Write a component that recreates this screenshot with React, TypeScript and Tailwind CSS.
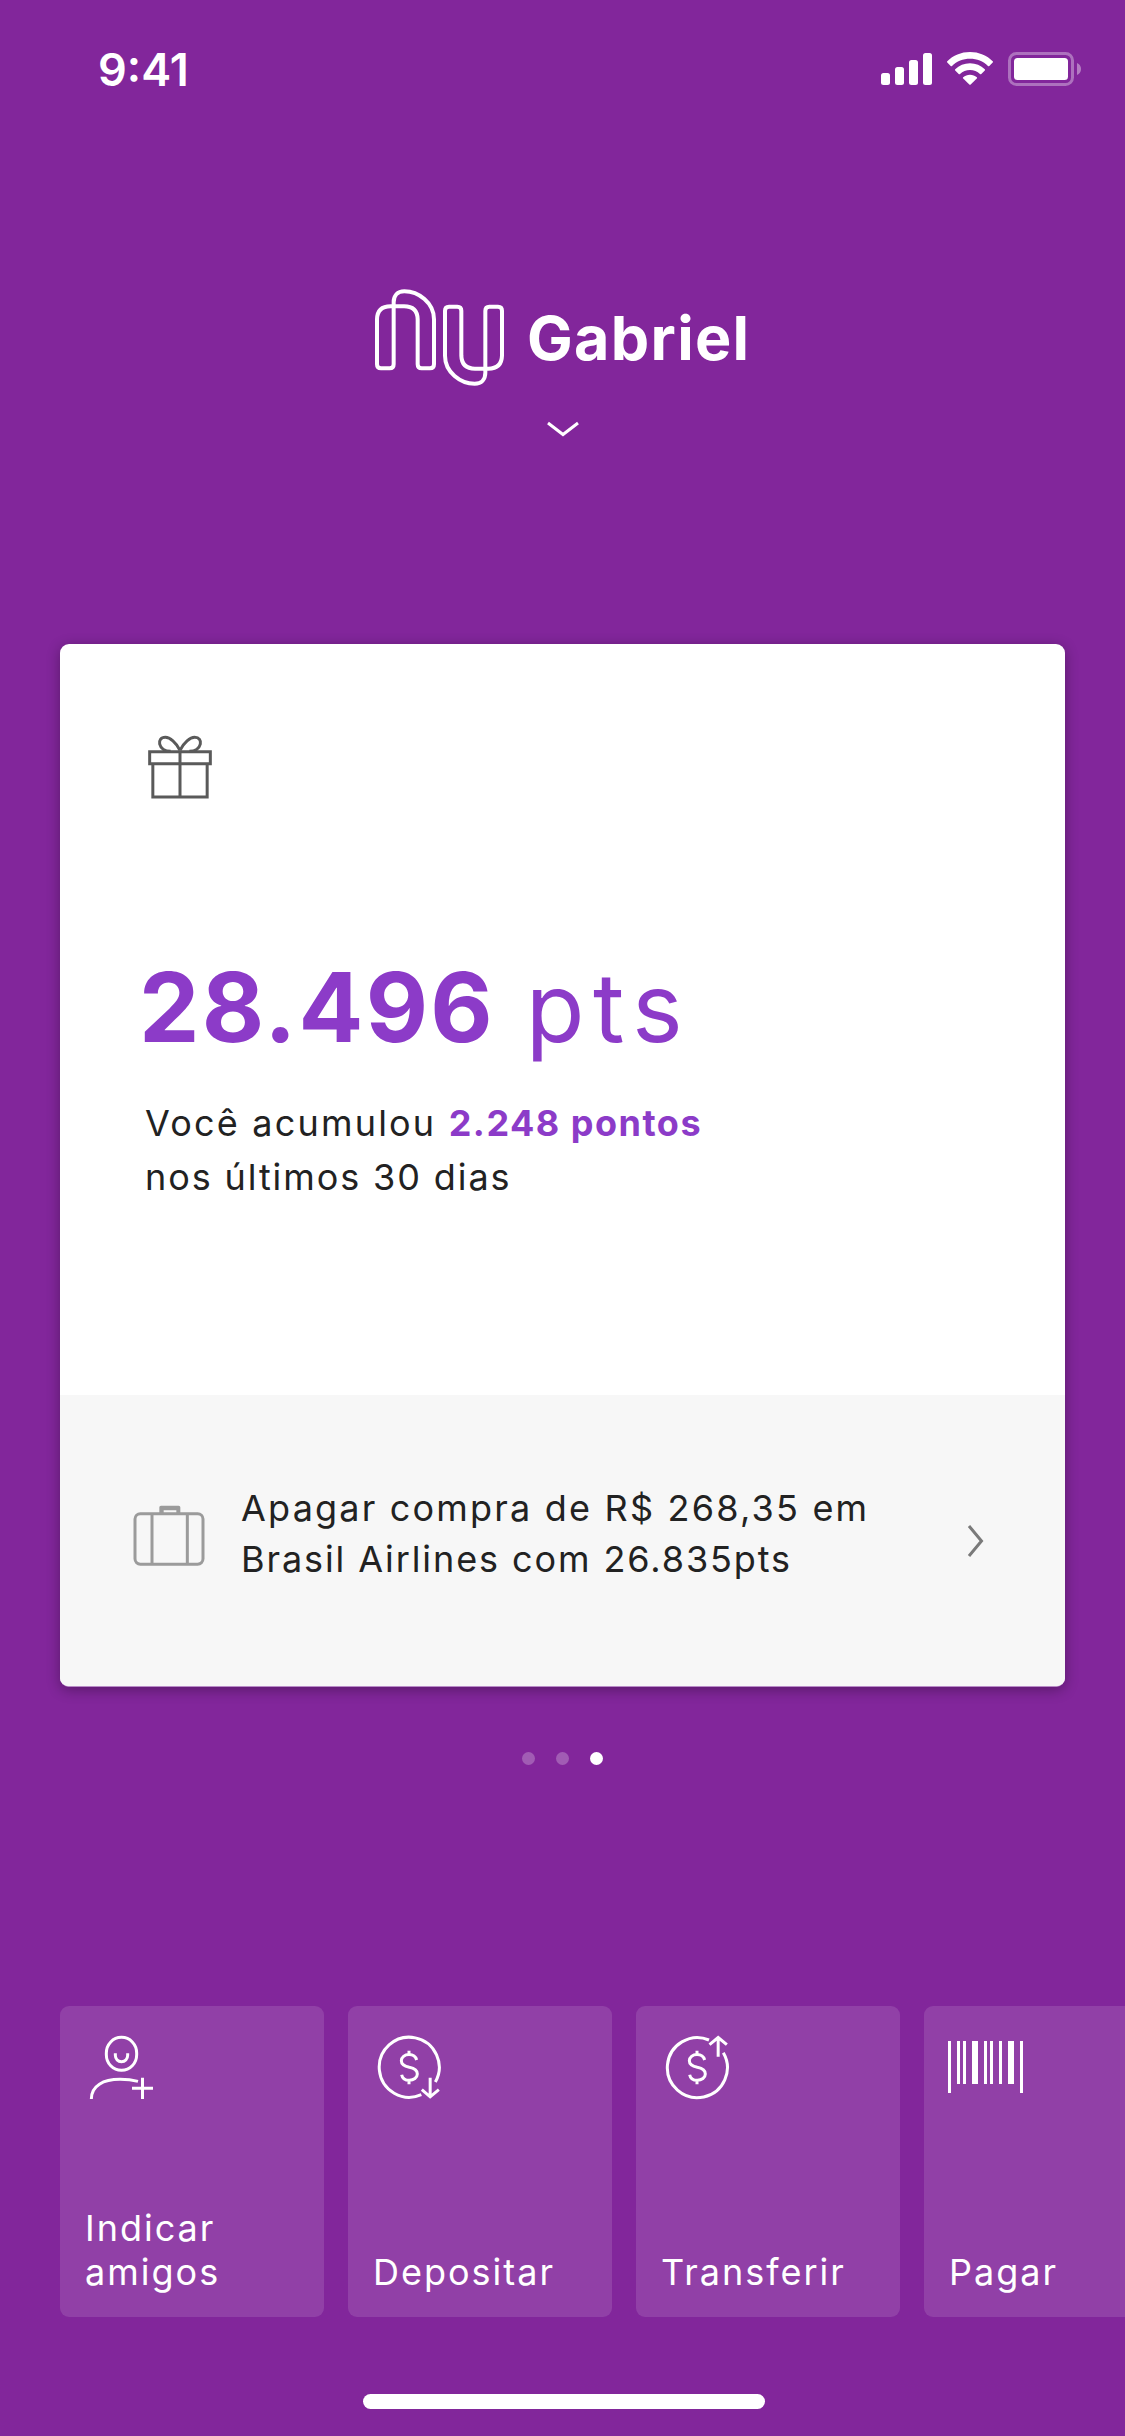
import React from 'react';

const shortcuts = [
  { label: 'Indicar amigos', icon: <InviteIcon /> },
  { label: 'Depositar', icon: <DepositIcon /> },
  { label: 'Transferir', icon: <TransferIcon /> },
  { label: 'Pagar', icon: <BarcodeIcon /> },
];

function StatusBar() {
  return (
    <div className="flex h-[132px] items-start justify-between pl-[98px] pr-[44px] text-white">
      <span className="mt-[47px] text-[45px] leading-[45px] font-semibold">9:41</span>
      <div className="mt-[52px] flex">
        {/* Signal */}
        <svg className="mt-px h-[32px] w-[51px]" viewBox="0 0 51 32" fill="currentColor">
          <rect x="0" y="20" width="9" height="12" rx="2.5" />
          <rect x="14" y="14" width="9" height="18" rx="2.5" />
          <rect x="28" y="7" width="9" height="25" rx="2.5" />
          <rect x="42" y="0" width="9" height="32" rx="2.5" />
        </svg>
        {/* Wifi */}
        <svg className="ml-[15px] h-[33px] w-[46px]" viewBox="0 0 46 33" fill="currentColor">
          <path d="M23 0C31.800 0 40 3.400 45.700 9.200Q46.300 9.900 45.700 10.500L42.300 13.900Q41.700 14.400 41 13.900C36.200 9.300 29.900 6.800 23 6.800S9.800 9.300 5 13.900Q4.300 14.400 3.700 13.900L.300 10.500Q-.300 9.900 .300 9.200C6 3.400 14.200 0 23 0Z" />
          <path d="M23 11.200C28.700 11.200 33.900 13.400 37.800 17.200Q38.400 17.900 37.800 18.500L34.300 21.900Q33.700 22.500 33 21.900C30.300 19.400 26.800 18 23 18S15.700 19.400 13 21.900Q12.300 22.500 11.700 21.900L8.200 18.500Q7.600 17.900 8.200 17.200C12.100 13.400 17.300 11.200 23 11.200Z" />
          <path d="M23 22.700C25.600 22.700 28 23.600 29.800 25.200Q30.400 25.900 29.800 26.500L23.700 32.500Q23 33.100 22.300 32.500L16.200 26.500Q15.600 25.900 16.200 25.200C18 23.600 20.400 22.700 23 22.700Z" />
        </svg>
        {/* Battery */}
        <svg className="ml-[15px] h-[34px] w-[73px]" viewBox="0 0 73 34">
          <rect x="1.500" y="1.500" width="63" height="31" rx="7" fill="none" stroke="#fff" strokeOpacity=".35" strokeWidth="3" />
          <rect x="6" y="6" width="54" height="22" rx="3.500" fill="#fff" />
          <path d="M69 11V23C71.500 22 73 19.700 73 17S71.500 12 69 11Z" fill="#fff" fillOpacity=".4" />
        </svg>
      </div>
    </div>
  );
}

function Header() {
  return (
    <header className="flex flex-col items-center">
      <div className="mt-[156px] flex h-[99px] w-[377px] items-start gap-[22px]">
        <svg
          className="h-[99px] w-[131px] shrink-0"
          viewBox="42 54 393 297"
          fill="none"
          stroke="#fff"
          strokeWidth="12"
        >
          <path d="M173 148V283Q173 295 185 295H210Q222 295 222 283V148C222 98 175 64 133 64C112 64 101 78 101 97V283Q101 295 89 295H63Q51 295 51 283V148Q52 109 92 109H132Q172 109 173 148Z" />
          <path
            d="M173 148V283Q173 295 185 295H210Q222 295 222 283V148C222 98 175 64 133 64C112 64 101 78 101 97V283Q101 295 89 295H63Q51 295 51 283V148Q52 109 92 109H132Q172 109 173 148Z"
            transform="rotate(180 238.5 202.5)"
          />
        </svg>
        <h1 className="mt-[20px] text-[61px] leading-[60px] font-bold tracking-[1.300px] text-white">Gabriel</h1>
      </div>
      <svg className="mt-[34px] h-[16px] w-[34px]" viewBox="0 0 34 16" fill="none" stroke="#fff" strokeWidth="3">
        <path d="M2 2L17 13.500L32 2" />
      </svg>
    </header>
  );
}

function GiftIcon() {
  return (
    <svg className="h-[64px] w-[64px]" viewBox="324 316 192 192" fill="none" stroke="#5a5a5a" strokeWidth="9">
      <path d="M329 366H511V402H329ZM338.500 402V502H501.500V402M420 362V502" />
      <path d="M420 362C408 338 390 323 376 323C362 323 357 333 359 343C362 357 376 365 392 365" />
      <path d="M420 362C432 338 450 323 464 323C478 323 483 333 481 343C478 357 464 365 448 365" />
    </svg>
  );
}

function SuitcaseIcon() {
  return (
    <svg className="h-[62px] w-[72px] shrink-0" viewBox="278 406 216 186" fill="none" stroke="#9b9b9b" strokeWidth="9">
      <rect x="284" y="432" width="204" height="151.500" rx="16" />
      <path d="M335 432V583M441 432V583" />
      <path
        d="M357 430V413Q357 408 362 408H415Q420 408 420 413V430H408V422H370V430Z"
        fill="#9b9b9b"
        stroke="none"
      />
    </svg>
  );
}

function InviteIcon() {
  return (
    <svg className="h-[66px] w-[66px]" viewBox="114 131 198 198" fill="none" stroke="#fff" strokeWidth="9">
      <rect x="169" y="141" width="91" height="99" rx="45" ry="47" />
      <path d="M196 189V195C196 206 204 214 214.500 214S233 206 233 195V189" />
      <path d="M124 326C124 286 160 267 210 267C230 267 248 269 264 273" />
      <path d="M277.500 262V326M246 294H309" />
    </svg>
  );
}

function DollarSign() {
  return (
    <path d="M231 209C228 198 220 192.500 208 192.500C195 192.500 185 201 185 211C185 224 196 228 209 231C224 234 233 239 233 251C233 262 222 270 209 270C197 270 188 264 186 253M208 181V192.500M208 270V282" />
  );
}

function DepositIcon() {
  return (
    <svg className="h-[66px] w-[66px]" viewBox="109 131 198 198" fill="none" stroke="#fff" strokeWidth="9">
      <path d="M287 275A90 90 0 1 0 245 313" />
      <DollarSign />
      <path d="M271.500 262V319M246.500 298L271.500 319.500L297.500 298" />
    </svg>
  );
}

function TransferIcon() {
  return (
    <svg className="h-[66px] w-[66px]" viewBox="109 131 198 198" fill="none" stroke="#fff" strokeWidth="9">
      <path d="M287 187A90 90 0 1 1 244 149" />
      <DollarSign />
      <path d="M271.500 199V142M245.500 163L271.500 141.500L297.500 163" />
    </svg>
  );
}

function BarcodeIcon() {
  return (
    <svg className="-ml-1 mt-[7px] h-[52px] w-[75px]" viewBox="0 0 75 52" fill="#fff">
      <path d="M0 0h3v52h-3zM9 0h3v43h-3zM15 0h3v43h-3zM24 0h6v43h-6zM36 0h3v43h-3zM42 0h3v43h-3zM51 0h3v43h-3zM60 0h6v43h-6zM72 0h3v52h-3z" />
    </svg>
  );
}

function RewardsCard() {
  return (
    <section className="mx-[60px] mt-[206px] flex h-[1043px] flex-col overflow-hidden rounded-[9px] border-b border-[#b98cc8] bg-white shadow-[0_3px_14px_rgba(0,0,0,0.32)]">
      <div className="h-[751px] pt-[91px] pl-[88px]">
        <GiftIcon />
        <p className="-ml-[9px] mt-[158px] text-[96px] leading-[100px] whitespace-nowrap text-[#8c3bc8]">
          <span className="font-bold tracking-[2.200px]">28.496</span>
          <span className="ml-[31px] tracking-[8.500px]">pts</span>
        </p>
        <p className="-ml-[3px] mt-[39px] text-[36px] leading-[54px] whitespace-nowrap text-[#222]">
          <span className="tracking-[2.2px]">Você acumulou </span>
          <strong className="font-bold tracking-[1.5px] text-[#8c3bc8]">2.248 pontos</strong>
          <br />
          <span className="tracking-[1.9px]">nos últimos 30 dias</span>
        </p>
      </div>

      {/* Offer */}
      <div className="flex flex-1 items-start bg-[#f7f7f7] pr-[81px] pl-[73px]">
        <div className="mt-[110px]">
          <SuitcaseIcon />
        </div>
        <p className="mt-[88px] ml-[36px] flex-1 text-[36px] leading-[51px] whitespace-nowrap text-[#222]">
          <span className="tracking-[2.2px]">Apagar compra de R$ 268,35 em</span>
          <br />
          <span className="tracking-[1.9px]">Brasil Airlines com 26.835pts</span>
        </p>
        <svg className="mt-[129px] h-[34px] w-[17px]" viewBox="0 0 17 34" fill="none" stroke="#7a7a7a" strokeWidth="3">
          <path d="M2 2L14.500 17L2 32" />
        </svg>
      </div>
    </section>
  );
}

export default function App() {
  return (
    <div className="flex h-[2436px] w-[1125px] flex-col overflow-hidden bg-[#82269b] font-['Inter',sans-serif]">
      <StatusBar />
      <Header />
      <div className="h-px" />
      <RewardsCard />

      {/* Pager */}
      <div className="mt-[65px] flex justify-center gap-[21px]">
        <span className="h-[13px] w-[13px] rounded-full bg-white/25" />
        <span className="h-[13px] w-[13px] rounded-full bg-white/25" />
        <span className="h-[13px] w-[13px] rounded-full bg-white" />
      </div>

      {/* Shortcuts */}
      <div className="mt-[241px] flex gap-6 pl-[60px]">
        {shortcuts.map((item) => (
          <button
            key={item.label}
            className="flex h-[311px] w-[264px] shrink-0 flex-col justify-between rounded-[9px] bg-white/12 pt-[28px] pr-[40px] pb-[23px] pl-[28px] text-left"
          >
            {item.icon}
            <span className="-ml-[3px] text-[36px] leading-[44px] tracking-[2px] text-white">{item.label}</span>
          </button>
        ))}
      </div>

      {/* Home indicator */}
      <div className="mt-auto mb-[27px] ml-[363px] h-[15px] w-[402px] rounded-full bg-white" />
    </div>
  );
}
